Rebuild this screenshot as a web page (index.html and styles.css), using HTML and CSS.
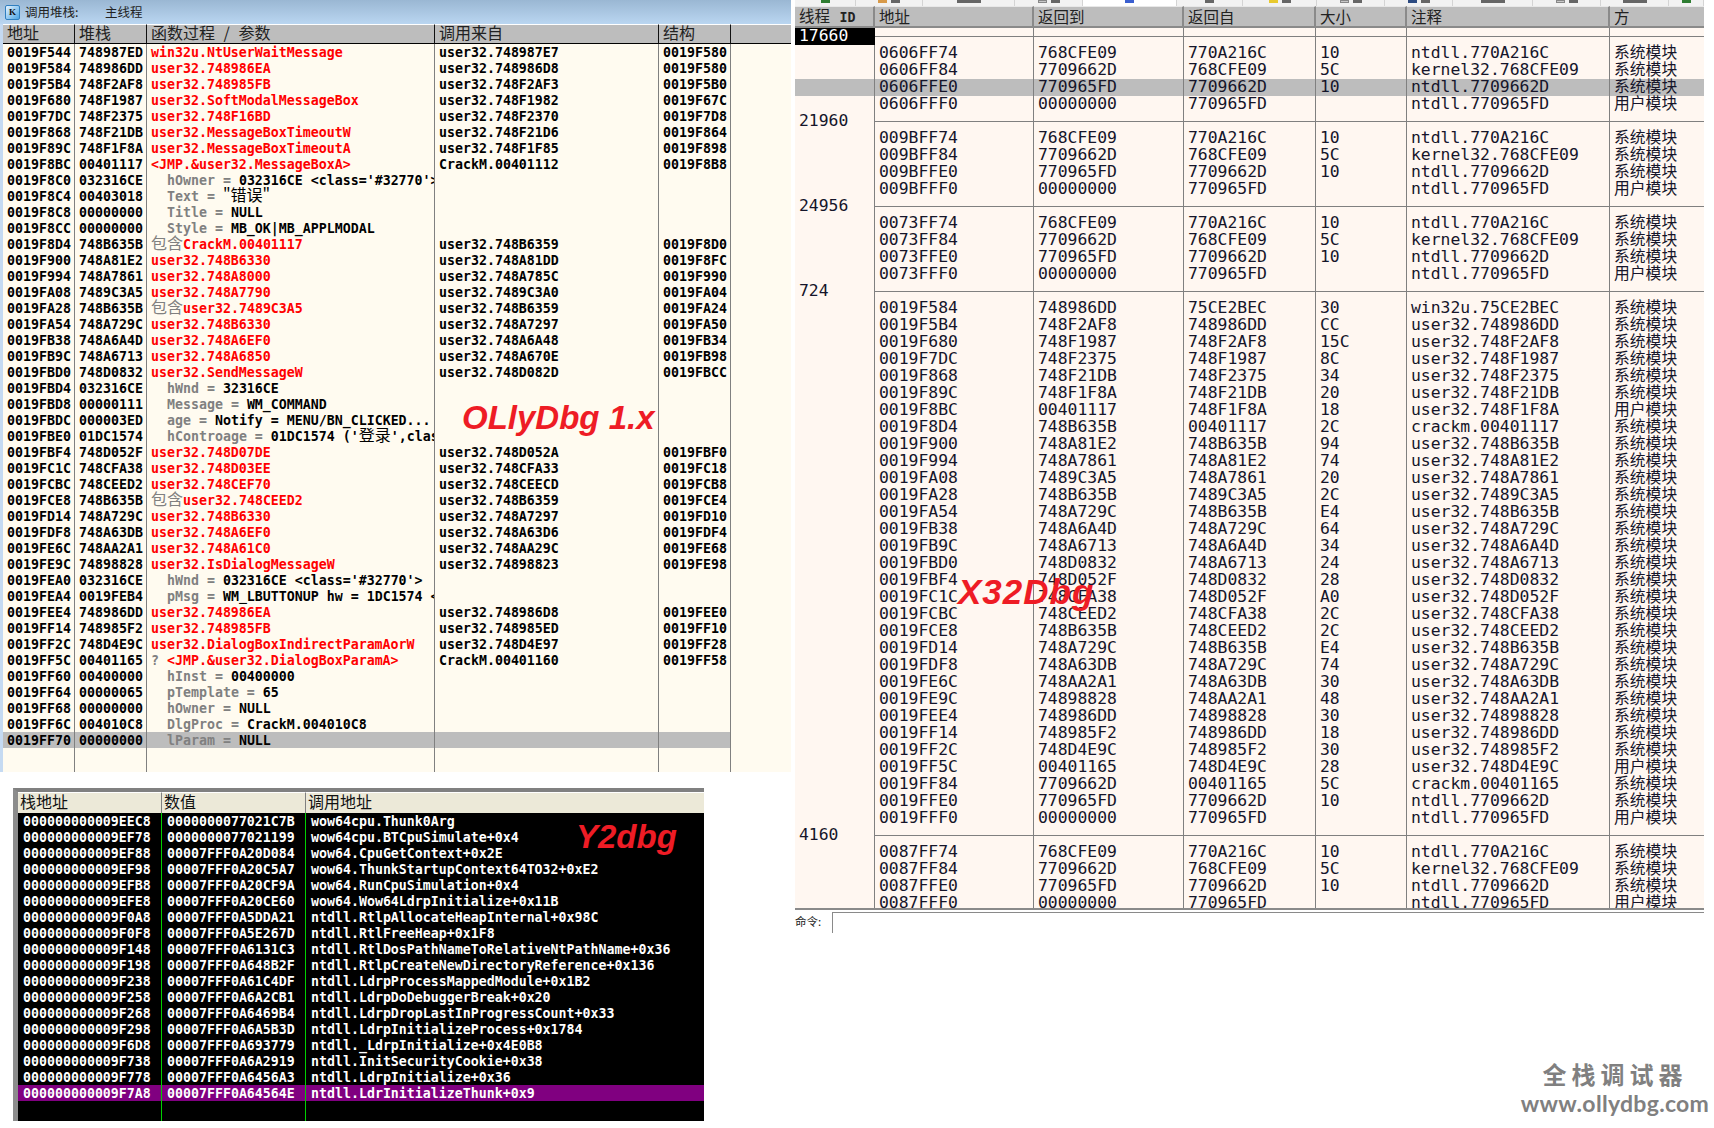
FILE: index.html
```html
<!DOCTYPE html>
<html lang="zh-CN">
<head>
<meta charset="utf-8">
<title>调用堆栈对比</title>
<link rel="stylesheet" href="styles.css">
</head>
<body>
<section class="win olly">
  <header class="olly-title">
    <span class="olly-icon">K</span>
    <span class="olly-label">调用堆栈:</span>
    <span class="olly-thread">主线程</span>
  </header>
  <table class="olly-table">
    <colgroup><col class="oc1"><col class="oc2"><col class="oc3"><col class="oc4"><col class="oc5"><col></colgroup>
    <thead><tr><th>地址</th><th>堆栈</th><th class="spread">函数过程 / 参数</th><th>调用来自</th><th>结构</th><th></th></tr></thead>
    <tbody>
      <tr><td>0019F544</td><td>748987ED</td><td class="r">win32u.NtUserWaitMessage</td><td>user32.748987E7</td><td>0019F580</td><td></td></tr>
      <tr><td>0019F584</td><td>748986DD</td><td class="r">user32.748986EA</td><td>user32.748986D8</td><td>0019F580</td><td></td></tr>
      <tr><td>0019F5B4</td><td>748F2AF8</td><td class="r">user32.748985FB</td><td>user32.748F2AF3</td><td>0019F5B0</td><td></td></tr>
      <tr><td>0019F680</td><td>748F1987</td><td class="r">user32.SoftModalMessageBox</td><td>user32.748F1982</td><td>0019F67C</td><td></td></tr>
      <tr><td>0019F7DC</td><td>748F2375</td><td class="r">user32.748F16BD</td><td>user32.748F2370</td><td>0019F7D8</td><td></td></tr>
      <tr><td>0019F868</td><td>748F21DB</td><td class="r">user32.MessageBoxTimeoutW</td><td>user32.748F21D6</td><td>0019F864</td><td></td></tr>
      <tr><td>0019F89C</td><td>748F1F8A</td><td class="r">user32.MessageBoxTimeoutA</td><td>user32.748F1F85</td><td>0019F898</td><td></td></tr>
      <tr><td>0019F8BC</td><td>00401117</td><td class="r">&lt;JMP.&amp;user32.MessageBoxA&gt;</td><td>CrackM.00401112</td><td>0019F8B8</td><td></td></tr>
      <tr><td>0019F8C0</td><td>032316CE</td><td class="clip"><span class="arg">hOwner =</span> 032316CE &lt;class='#32770'&gt;</td><td></td><td></td><td></td></tr>
      <tr><td>0019F8C4</td><td>00403018</td><td><span class="arg">Text =</span> <span class="cjk">"错误"</span></td><td></td><td></td><td></td></tr>
      <tr><td>0019F8C8</td><td>00000000</td><td><span class="arg">Title =</span> NULL</td><td></td><td></td><td></td></tr>
      <tr><td>0019F8CC</td><td>00000000</td><td><span class="arg">Style =</span> MB_OK|MB_APPLMODAL</td><td></td><td></td><td></td></tr>
      <tr><td>0019F8D4</td><td>748B635B</td><td class="r"><span class="cjk mute">包含</span>CrackM.00401117</td><td>user32.748B6359</td><td>0019F8D0</td><td></td></tr>
      <tr><td>0019F900</td><td>748A81E2</td><td class="r">user32.748B6330</td><td>user32.748A81DD</td><td>0019F8FC</td><td></td></tr>
      <tr><td>0019F994</td><td>748A7861</td><td class="r">user32.748A8000</td><td>user32.748A785C</td><td>0019F990</td><td></td></tr>
      <tr><td>0019FA08</td><td>7489C3A5</td><td class="r">user32.748A7790</td><td>user32.7489C3A0</td><td>0019FA04</td><td></td></tr>
      <tr><td>0019FA28</td><td>748B635B</td><td class="r"><span class="cjk mute">包含</span>user32.7489C3A5</td><td>user32.748B6359</td><td>0019FA24</td><td></td></tr>
      <tr><td>0019FA54</td><td>748A729C</td><td class="r">user32.748B6330</td><td>user32.748A7297</td><td>0019FA50</td><td></td></tr>
      <tr><td>0019FB38</td><td>748A6A4D</td><td class="r">user32.748A6EF0</td><td>user32.748A6A48</td><td>0019FB34</td><td></td></tr>
      <tr><td>0019FB9C</td><td>748A6713</td><td class="r">user32.748A6850</td><td>user32.748A670E</td><td>0019FB98</td><td></td></tr>
      <tr><td>0019FBD0</td><td>748D0832</td><td class="r">user32.SendMessageW</td><td>user32.748D082D</td><td>0019FBCC</td><td></td></tr>
      <tr><td>0019FBD4</td><td>032316CE</td><td><span class="arg">hWnd =</span> 32316CE</td><td></td><td></td><td></td></tr>
      <tr><td>0019FBD8</td><td>00000111</td><td><span class="arg">Message =</span> WM_COMMAND</td><td></td><td></td><td></td></tr>
      <tr><td>0019FBDC</td><td>000003ED</td><td><span class="arg">age =</span> Notify = MENU/BN_CLICKED...</td><td></td><td></td><td></td></tr>
      <tr><td>0019FBE0</td><td>01DC1574</td><td class="clip"><span class="arg">hControage =</span> 01DC1574 ('<span class="cjk">登录</span>',clas</td><td></td><td></td><td></td></tr>
      <tr><td>0019FBF4</td><td>748D052F</td><td class="r">user32.748D07DE</td><td>user32.748D052A</td><td>0019FBF0</td><td></td></tr>
      <tr><td>0019FC1C</td><td>748CFA38</td><td class="r">user32.748D03EE</td><td>user32.748CFA33</td><td>0019FC18</td><td></td></tr>
      <tr><td>0019FCBC</td><td>748CEED2</td><td class="r">user32.748CEF70</td><td>user32.748CEECD</td><td>0019FCB8</td><td></td></tr>
      <tr><td>0019FCE8</td><td>748B635B</td><td class="r"><span class="cjk mute">包含</span>user32.748CEED2</td><td>user32.748B6359</td><td>0019FCE4</td><td></td></tr>
      <tr><td>0019FD14</td><td>748A729C</td><td class="r">user32.748B6330</td><td>user32.748A7297</td><td>0019FD10</td><td></td></tr>
      <tr><td>0019FDF8</td><td>748A63DB</td><td class="r">user32.748A6EF0</td><td>user32.748A63D6</td><td>0019FDF4</td><td></td></tr>
      <tr><td>0019FE6C</td><td>748AA2A1</td><td class="r">user32.748A61C0</td><td>user32.748AA29C</td><td>0019FE68</td><td></td></tr>
      <tr><td>0019FE9C</td><td>74898828</td><td class="r">user32.IsDialogMessageW</td><td>user32.74898823</td><td>0019FE98</td><td></td></tr>
      <tr><td>0019FEA0</td><td>032316CE</td><td><span class="arg">hWnd =</span> 032316CE &lt;class='#32770'&gt;</td><td></td><td></td><td></td></tr>
      <tr><td>0019FEA4</td><td>0019FEB4</td><td class="clip"><span class="arg">pMsg =</span> WM_LBUTTONUP hw = 1DC1574 &lt;</td><td></td><td></td><td></td></tr>
      <tr><td>0019FEE4</td><td>748986DD</td><td class="r">user32.748986EA</td><td>user32.748986D8</td><td>0019FEE0</td><td></td></tr>
      <tr><td>0019FF14</td><td>748985F2</td><td class="r">user32.748985FB</td><td>user32.748985ED</td><td>0019FF10</td><td></td></tr>
      <tr><td>0019FF2C</td><td>748D4E9C</td><td class="r">user32.DialogBoxIndirectParamAorW</td><td>user32.748D4E97</td><td>0019FF28</td><td></td></tr>
      <tr><td>0019FF5C</td><td>00401165</td><td class="r"><span class="mute">?</span> &lt;JMP.&amp;user32.DialogBoxParamA&gt;</td><td>CrackM.00401160</td><td>0019FF58</td><td></td></tr>
      <tr><td>0019FF60</td><td>00400000</td><td><span class="arg">hInst =</span> 00400000</td><td></td><td></td><td></td></tr>
      <tr><td>0019FF64</td><td>00000065</td><td><span class="arg">pTemplate =</span> 65</td><td></td><td></td><td></td></tr>
      <tr><td>0019FF68</td><td>00000000</td><td><span class="arg">hOwner =</span> NULL</td><td></td><td></td><td></td></tr>
      <tr><td>0019FF6C</td><td>004010C8</td><td><span class="arg">DlgProc =</span> CrackM.004010C8</td><td></td><td></td><td></td></tr>
      <tr class="sel"><td>0019FF70</td><td>00000000</td><td><span class="arg">lParam =</span> NULL</td><td></td><td></td><td></td></tr>
      <tr class="fill"><td></td><td></td><td></td><td></td><td></td><td></td></tr>
    </tbody>
  </table>
  <span class="sig sig-olly">OLlyDbg 1.x</span>
</section>

<section class="win ydbg">
  <table class="y-table">
    <colgroup><col class="yc1"><col class="yc2"><col></colgroup>
    <thead><tr><th>栈地址</th><th>数值</th><th>调用地址</th></tr></thead>
    <tbody>
      <tr><td>000000000009EEC8</td><td>0000000077021C7B</td><td>wow64cpu.Thunk0Arg</td></tr>
      <tr><td>000000000009EF78</td><td>0000000077021199</td><td>wow64cpu.BTCpuSimulate+0x4</td></tr>
      <tr><td>000000000009EF88</td><td>00007FFF0A20D084</td><td>wow64.CpuGetContext+0x2E</td></tr>
      <tr><td>000000000009EF98</td><td>00007FFF0A20C5A7</td><td>wow64.ThunkStartupContext64TO32+0xE2</td></tr>
      <tr><td>000000000009EFB8</td><td>00007FFF0A20CF9A</td><td>wow64.RunCpuSimulation+0x4</td></tr>
      <tr><td>000000000009EFE8</td><td>00007FFF0A20CE60</td><td>wow64.Wow64LdrpInitialize+0x11B</td></tr>
      <tr><td>000000000009F0A8</td><td>00007FFF0A5DDA21</td><td>ntdll.RtlpAllocateHeapInternal+0x98C</td></tr>
      <tr><td>000000000009F0F8</td><td>00007FFF0A5E267D</td><td>ntdll.RtlFreeHeap+0x1F8</td></tr>
      <tr><td>000000000009F148</td><td>00007FFF0A6131C3</td><td>ntdll.RtlDosPathNameToRelativeNtPathName+0x36</td></tr>
      <tr><td>000000000009F198</td><td>00007FFF0A648B2F</td><td>ntdll.RtlpCreateNewDirectoryReference+0x136</td></tr>
      <tr><td>000000000009F238</td><td>00007FFF0A61C4DF</td><td>ntdll.LdrpProcessMappedModule+0x1B2</td></tr>
      <tr><td>000000000009F258</td><td>00007FFF0A6A2CB1</td><td>ntdll.LdrpDoDebuggerBreak+0x20</td></tr>
      <tr><td>000000000009F268</td><td>00007FFF0A6469B4</td><td>ntdll.LdrpDropLastInProgressCount+0x33</td></tr>
      <tr><td>000000000009F298</td><td>00007FFF0A6A5B3D</td><td>ntdll.LdrpInitializeProcess+0x1784</td></tr>
      <tr><td>000000000009F6D8</td><td>00007FFF0A693779</td><td>ntdll._LdrpInitialize+0x4E0B8</td></tr>
      <tr><td>000000000009F738</td><td>00007FFF0A6A2919</td><td>ntdll.InitSecurityCookie+0x38</td></tr>
      <tr><td>000000000009F778</td><td>00007FFF0A6456A3</td><td>ntdll.LdrpInitialize+0x36</td></tr>
      <tr class="sel"><td>000000000009F7A8</td><td>00007FFF0A64564E</td><td>ntdll.LdrInitializeThunk+0x9</td></tr>
      <tr class="fill"><td></td><td></td><td></td></tr>
    </tbody>
  </table>
  <span class="sig sig-y">Y2dbg</span>
</section>

<section class="win x32">
  <div class="x-tools">
    <span class="tool"><i class="mark green"></i></span>
    <span class="tool"><i class="mark orange"></i><i class="mark dark"></i></span>
    <span class="tool"><i class="mark dark wide"></i></span>
    <span class="tool"><i class="mark pale"></i><i class="mark dark"></i></span>
    <span class="tool active"><i class="mark blue"></i></span>
    <span class="tool"><i class="mark dark"></i></span>
    <span class="tool"><i class="mark yellow"></i><i class="mark dark"></i></span>
    <span class="tool"><i class="mark pale"></i><i class="mark dark"></i></span>
    <span class="tool"><i class="mark navy"></i><i class="mark dark"></i></span>
    <span class="tool"><i class="mark dark wide"></i></span>
    <span class="tool"><i class="mark pale"></i><i class="mark dark"></i></span>
    <span class="tool"><i class="mark dark wide"></i></span>
    <span class="tool"><i class="mark green"></i></span>
  </div>
  <div class="x-scroll">
    <table class="x-table">
      <colgroup><col class="xc1"><col class="xc2"><col class="xc3"><col class="xc4"><col class="xc5"><col class="xc6"><col></colgroup>
      <thead><tr><th>线程 <b class="id">ID</b></th><th>地址</th><th>返回到</th><th>返回自</th><th>大小</th><th>注释</th><th>方</th></tr></thead>
      <tbody>
        <tr class="gap"><th class="cur">17660</th><td></td><td></td><td></td><td></td><td></td><td></td></tr>
        <tr><td></td><td>0606FF74</td><td>768CFE09</td><td>770A216C</td><td>10</td><td>ntdll.770A216C</td><td>系统模块</td></tr>
        <tr><td></td><td>0606FF84</td><td>7709662D</td><td>768CFE09</td><td>5C</td><td>kernel32.768CFE09</td><td>系统模块</td></tr>
        <tr class="sel"><td></td><td>0606FFE0</td><td>770965FD</td><td>7709662D</td><td>10</td><td>ntdll.7709662D</td><td>系统模块</td></tr>
        <tr><td></td><td>0606FFF0</td><td>00000000</td><td>770965FD</td><td></td><td>ntdll.770965FD</td><td>用户模块</td></tr>
        <tr class="gap"><th>21960</th><td></td><td></td><td></td><td></td><td></td><td></td></tr>
        <tr><td></td><td>009BFF74</td><td>768CFE09</td><td>770A216C</td><td>10</td><td>ntdll.770A216C</td><td>系统模块</td></tr>
        <tr><td></td><td>009BFF84</td><td>7709662D</td><td>768CFE09</td><td>5C</td><td>kernel32.768CFE09</td><td>系统模块</td></tr>
        <tr><td></td><td>009BFFE0</td><td>770965FD</td><td>7709662D</td><td>10</td><td>ntdll.7709662D</td><td>系统模块</td></tr>
        <tr><td></td><td>009BFFF0</td><td>00000000</td><td>770965FD</td><td></td><td>ntdll.770965FD</td><td>用户模块</td></tr>
        <tr class="gap"><th>24956</th><td></td><td></td><td></td><td></td><td></td><td></td></tr>
        <tr><td></td><td>0073FF74</td><td>768CFE09</td><td>770A216C</td><td>10</td><td>ntdll.770A216C</td><td>系统模块</td></tr>
        <tr><td></td><td>0073FF84</td><td>7709662D</td><td>768CFE09</td><td>5C</td><td>kernel32.768CFE09</td><td>系统模块</td></tr>
        <tr><td></td><td>0073FFE0</td><td>770965FD</td><td>7709662D</td><td>10</td><td>ntdll.7709662D</td><td>系统模块</td></tr>
        <tr><td></td><td>0073FFF0</td><td>00000000</td><td>770965FD</td><td></td><td>ntdll.770965FD</td><td>用户模块</td></tr>
        <tr class="gap"><th>724</th><td></td><td></td><td></td><td></td><td></td><td></td></tr>
        <tr><td></td><td>0019F584</td><td>748986DD</td><td>75CE2BEC</td><td>30</td><td>win32u.75CE2BEC</td><td>系统模块</td></tr>
        <tr><td></td><td>0019F5B4</td><td>748F2AF8</td><td>748986DD</td><td>CC</td><td>user32.748986DD</td><td>系统模块</td></tr>
        <tr><td></td><td>0019F680</td><td>748F1987</td><td>748F2AF8</td><td>15C</td><td>user32.748F2AF8</td><td>系统模块</td></tr>
        <tr><td></td><td>0019F7DC</td><td>748F2375</td><td>748F1987</td><td>8C</td><td>user32.748F1987</td><td>系统模块</td></tr>
        <tr><td></td><td>0019F868</td><td>748F21DB</td><td>748F2375</td><td>34</td><td>user32.748F2375</td><td>系统模块</td></tr>
        <tr><td></td><td>0019F89C</td><td>748F1F8A</td><td>748F21DB</td><td>20</td><td>user32.748F21DB</td><td>系统模块</td></tr>
        <tr><td></td><td>0019F8BC</td><td>00401117</td><td>748F1F8A</td><td>18</td><td>user32.748F1F8A</td><td>用户模块</td></tr>
        <tr><td></td><td>0019F8D4</td><td>748B635B</td><td>00401117</td><td>2C</td><td>crackm.00401117</td><td>系统模块</td></tr>
        <tr><td></td><td>0019F900</td><td>748A81E2</td><td>748B635B</td><td>94</td><td>user32.748B635B</td><td>系统模块</td></tr>
        <tr><td></td><td>0019F994</td><td>748A7861</td><td>748A81E2</td><td>74</td><td>user32.748A81E2</td><td>系统模块</td></tr>
        <tr><td></td><td>0019FA08</td><td>7489C3A5</td><td>748A7861</td><td>20</td><td>user32.748A7861</td><td>系统模块</td></tr>
        <tr><td></td><td>0019FA28</td><td>748B635B</td><td>7489C3A5</td><td>2C</td><td>user32.7489C3A5</td><td>系统模块</td></tr>
        <tr><td></td><td>0019FA54</td><td>748A729C</td><td>748B635B</td><td>E4</td><td>user32.748B635B</td><td>系统模块</td></tr>
        <tr><td></td><td>0019FB38</td><td>748A6A4D</td><td>748A729C</td><td>64</td><td>user32.748A729C</td><td>系统模块</td></tr>
        <tr><td></td><td>0019FB9C</td><td>748A6713</td><td>748A6A4D</td><td>34</td><td>user32.748A6A4D</td><td>系统模块</td></tr>
        <tr><td></td><td>0019FBD0</td><td>748D0832</td><td>748A6713</td><td>24</td><td>user32.748A6713</td><td>系统模块</td></tr>
        <tr><td></td><td>0019FBF4</td><td>748D052F</td><td>748D0832</td><td>28</td><td>user32.748D0832</td><td>系统模块</td></tr>
        <tr><td></td><td>0019FC1C</td><td>748CFA38</td><td>748D052F</td><td>A0</td><td>user32.748D052F</td><td>系统模块</td></tr>
        <tr><td></td><td>0019FCBC</td><td>748CEED2</td><td>748CFA38</td><td>2C</td><td>user32.748CFA38</td><td>系统模块</td></tr>
        <tr><td></td><td>0019FCE8</td><td>748B635B</td><td>748CEED2</td><td>2C</td><td>user32.748CEED2</td><td>系统模块</td></tr>
        <tr><td></td><td>0019FD14</td><td>748A729C</td><td>748B635B</td><td>E4</td><td>user32.748B635B</td><td>系统模块</td></tr>
        <tr><td></td><td>0019FDF8</td><td>748A63DB</td><td>748A729C</td><td>74</td><td>user32.748A729C</td><td>系统模块</td></tr>
        <tr><td></td><td>0019FE6C</td><td>748AA2A1</td><td>748A63DB</td><td>30</td><td>user32.748A63DB</td><td>系统模块</td></tr>
        <tr><td></td><td>0019FE9C</td><td>74898828</td><td>748AA2A1</td><td>48</td><td>user32.748AA2A1</td><td>系统模块</td></tr>
        <tr><td></td><td>0019FEE4</td><td>748986DD</td><td>74898828</td><td>30</td><td>user32.74898828</td><td>系统模块</td></tr>
        <tr><td></td><td>0019FF14</td><td>748985F2</td><td>748986DD</td><td>18</td><td>user32.748986DD</td><td>系统模块</td></tr>
        <tr><td></td><td>0019FF2C</td><td>748D4E9C</td><td>748985F2</td><td>30</td><td>user32.748985F2</td><td>系统模块</td></tr>
        <tr><td></td><td>0019FF5C</td><td>00401165</td><td>748D4E9C</td><td>28</td><td>user32.748D4E9C</td><td>用户模块</td></tr>
        <tr><td></td><td>0019FF84</td><td>7709662D</td><td>00401165</td><td>5C</td><td>crackm.00401165</td><td>系统模块</td></tr>
        <tr><td></td><td>0019FFE0</td><td>770965FD</td><td>7709662D</td><td>10</td><td>ntdll.7709662D</td><td>系统模块</td></tr>
        <tr><td></td><td>0019FFF0</td><td>00000000</td><td>770965FD</td><td></td><td>ntdll.770965FD</td><td>用户模块</td></tr>
        <tr class="gap"><th>4160</th><td></td><td></td><td></td><td></td><td></td><td></td></tr>
        <tr><td></td><td>0087FF74</td><td>768CFE09</td><td>770A216C</td><td>10</td><td>ntdll.770A216C</td><td>系统模块</td></tr>
        <tr><td></td><td>0087FF84</td><td>7709662D</td><td>768CFE09</td><td>5C</td><td>kernel32.768CFE09</td><td>系统模块</td></tr>
        <tr><td></td><td>0087FFE0</td><td>770965FD</td><td>7709662D</td><td>10</td><td>ntdll.7709662D</td><td>系统模块</td></tr>
        <tr><td></td><td>0087FFF0</td><td>00000000</td><td>770965FD</td><td></td><td>ntdll.770965FD</td><td>用户模块</td></tr>
      </tbody>
    </table>
  </div>
  <footer class="x-cmd">
    <label class="x-cmd-label">命令:</label>
    <div class="x-cmd-input"></div>
  </footer>
  <span class="sig sig-x">X32Dbg</span>
</section>

<aside class="brand">
  <div class="brand-cn">全栈调试器</div>
  <div class="brand-url">www.ollydbg.com</div>
</aside>
</body>
</html>
```

FILE: styles.css
```css
html, body { margin: 0; padding: 0; background: #fff; }
body { position: relative; width: 1714px; height: 1128px; overflow: hidden; }
table { border-collapse: separate; border-spacing: 0; table-layout: fixed; width: 100%; }
th, td { box-sizing: border-box; padding: 0; white-space: nowrap; text-align: left; font-weight: normal; }
.clip { overflow: hidden; }

.win { position: absolute; box-sizing: border-box; }

/* OllyDbg call stack */
.olly { left: 0; top: 0; width: 791px; height: 772px; background: #fffbf0; padding-left: 3px; box-shadow: inset 3px 0 0 #c5daf2; }
.olly-title { display: flex; align-items: center; height: 24px; margin-left: -3px; background: linear-gradient(#9ab7d3, #bad6f1); font: 12.5px/24px "Noto Sans CJK SC", sans-serif; color: #222; }
.olly-icon { box-sizing: border-box; width: 15px; height: 15px; margin: 0 5px; border-radius: 2px; border: 1px solid #2f7fc0; background: linear-gradient(135deg, #e6f4ff, #4aa3e3); font: bold 9px/13px "Liberation Serif", serif; color: #111; text-align: center; }
.olly-label { width: 80px; }
.oc1, .oc2 { width: 72px; }
.oc3 { width: 288px; }
.oc4 { width: 224px; }
.oc5 { width: 72px; }
.olly-table th { height: 20px; background: #bdbdbd; border-top: 1px solid #fff; border-bottom: 1px solid #000; border-right: 1px solid #111; padding: 0 0 4px 4px; font: 16px/14px "Noto Sans CJK SC", sans-serif; color: #222; }
.olly-table th:last-child { border-right: 0; }
.olly-table .spread { word-spacing: 5px; }
.olly-table td { height: 16px; padding: 2px 0 0 4px; border-right: 1px solid #808080; font: bold 13.28px/14px "DejaVu Sans Mono", "Noto Sans CJK SC", monospace; color: #000; }
.olly-table td:last-child { border-right: 0; }
.olly-table .r { color: #f00; }
.olly-table .sel td { background: #bdbdbd; }
.olly-table .sel td:last-child { background: none; }
.olly-table .fill td { height: 24px; }
.arg { margin-left: 16px; color: #808080; }
.cjk { font: 16px/0 "Noto Sans CJK SC", sans-serif; }
.mute { color: #808080; }

/* Signatures laid over the panels */
.sig { position: absolute; font-family: "Liberation Sans", sans-serif; font-weight: bold; font-style: italic; color: #ee1c25; white-space: nowrap; }
.sig-olly { left: 462px; top: 396px; font-size: 33px; line-height: 44px; }
.sig-y { left: 558px; top: 26px; font-size: 33px; line-height: 38px; }
.sig-x { left: 163px; top: 572px; font-size: 35px; line-height: 40px; letter-spacing: 1px; }

/* Ydbg */
.ydbg { left: 13px; top: 788px; width: 691px; height: 333px; background: #000; border-top: 4px solid #808080; border-left: 5px solid #8c8c8c; }
.yc1, .yc2 { width: 144px; }
.y-table th { height: 21px; background: #ece9d8; border-top: 1px solid #fff; border-right: 1px solid #808080; padding: 0 0 4px 2px; font: 16px/16px "Noto Sans CJK SC", sans-serif; color: #111; }
.y-table th:last-child { border-right: 0; }
.y-table td { height: 16px; padding: 2px 0 0 5px; border-right: 1px solid #00d000; font: bold 13.28px/14px "DejaVu Sans Mono", monospace; color: #fff; }
.y-table td:last-child { border-right: 0; }
.y-table .sel td { background: #800080; }
.y-table .fill td { height: 20px; }

/* x32dbg */
.x32 { left: 795px; top: 0; width: 909px; height: 936px; display: flex; flex-direction: column; }
.x-tools { display: grid; grid-template-columns: 61px 67px 92px 68px 94px 66px 74px 68px 68px 80px 68px 68px 35px; height: 6px; background: #f2f2f2; overflow: hidden; }
.tool { display: flex; gap: 4px; justify-content: center; border-right: 1px solid #d4d4d4; }
.tool.active { background: #fff; }
.mark { display: block; width: 9px; height: 3px; }
.mark.wide { width: 24px; }
.green { background: #2e7d32; }
.orange { background: #d89a4a; }
.dark { background: #666; }
.pale { background: #c9c9c9; border: 1px solid #888; box-sizing: border-box; }
.blue { background: #3a5fd0; }
.yellow { background: #e8c92e; }
.navy { background: #2c4a80; }
.x-scroll { height: 902px; overflow: hidden; background: #fff7f1; border-bottom: 2px solid #8a8a8a; }
.xc1 { width: 80px; }
.xc2 { width: 159px; }
.xc3 { width: 150px; }
.xc4 { width: 132px; }
.xc5 { width: 91px; }
.xc6 { width: 203px; }
.x-table thead th { height: 21px; background: #bdbdbd; border-top: 1px solid #e8e8e8; border-bottom: 2px solid #8a8a8a; border-right: 2px solid #8a8a8a; padding-left: 4px; font: 15.5px/17px "Noto Sans CJK SC", sans-serif; color: #222; }
.x-table thead th:last-child { border-right: 0; }
.id { font: bold 13.3px/17px "DejaVu Sans Mono", monospace; margin-left: 6px; }
.x-table td, .x-table tbody th { height: 17px; padding: 0 0 2px 4px; border-right: 1px solid #808080; font: 16.4px/15px "DejaVu Sans Mono", "Noto Sans CJK SC", monospace; color: #15152a; }
.x-table td:last-child { border-right: 0; padding-left: 4px; font-size: 15.8px; }
.x-table .gap td { background: linear-gradient(#808080, #808080) center / 100% 1px no-repeat; }
.x-table tbody th.cur { background: #000; color: #fff; border-right: 0; }
.x-table .sel td { background: #bdbdbd; }
.x-cmd { display: flex; align-items: flex-start; height: 26px; padding-top: 2px; box-sizing: border-box; }
.x-cmd-label { width: 37px; margin-top: 2px; font: 11.5px/14px "Noto Sans CJK SC", sans-serif; color: #222; }
.x-cmd-input { flex: 1; height: 20px; border-left: 1px solid #8a8a8a; border-top: 1px solid #8a8a8a; background: #fff; }

/* Watermark */
.brand { position: absolute; left: 1516px; top: 1058px; width: 198px; color: #808080; text-align: center; }
.brand-cn { font: bold 24px/32px "Noto Sans CJK SC", sans-serif; letter-spacing: 5px; }
.brand-url { font: bold 23px/26px "Lato", sans-serif; letter-spacing: .3px; }
```
